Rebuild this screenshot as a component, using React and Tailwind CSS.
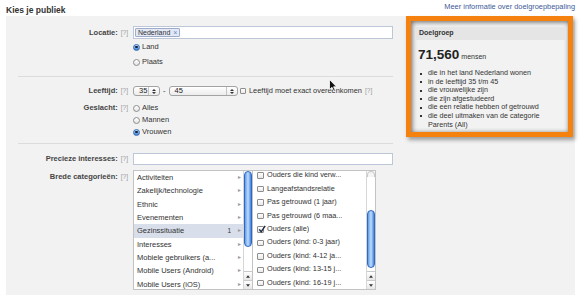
import React from "react";

const leftItems = [
  { label: "Activiteiten" },
  { label: "Zakelijk/technologie" },
  { label: "Ethnic" },
  { label: "Evenementen" },
  { label: "Gezinssituatie", count: "1", selected: true },
  { label: "Interesses" },
  { label: "Mobiele gebruikers (a..." },
  { label: "Mobile Users (Android)" },
  { label: "Mobile Users (iOS)" },
];

const rightItems = [
  { label: "Ouders die kind verw..." },
  { label: "Langeafstandsrelatie" },
  { label: "Pas getrouwd (1 jaar)" },
  { label: "Pas getrouwd (6 maa..." },
  { label: "Ouders (alle)", checked: true },
  { label: "Ouders (kind: 0-3 jaar)" },
  { label: "Ouders (kind: 4-12 ja..." },
  { label: "Ouders (kind: 13-15 j..." },
  { label: "Ouders (kind: 16-19 j..." },
];

const summary = [
  "die in het land Nederland wonen",
  "in de leeftijd 35 t/m 45",
  "die vrouwelijke zijn",
  "die zijn afgestudeerd",
  "die een relatie hebben of getrouwd",
];

function Help() {
  return <span className="ml-[3px] text-[6.5px] font-normal text-[#9a9a9a]">[?]</span>;
}

function Radio({ checked }) {
  if (checked) {
    return (
      <span className="flex h-[7px] w-[7px] shrink-0 items-center justify-center rounded-full border border-[#3b6cb0] bg-linear-to-b from-[#b8d6f7] to-[#3a7fd8]">
        <span className="h-[2.5px] w-[2.5px] rounded-full bg-[#13233f]" />
      </span>
    );
  }
  return <span className="h-[7px] w-[7px] shrink-0 rounded-full border border-[#8d8d8d] bg-linear-to-b from-white to-[#e4e4e4]" />;
}

function Checkbox({ checked }) {
  return (
    <span className="relative block h-[6.5px] w-[6.5px] shrink-0 rounded-[1px] border border-[#8d8d8d] bg-linear-to-b from-white to-[#e8e8e8]">
      {checked && (
        <svg viewBox="0 0 10 10" className="absolute -left-[0.5px] -top-[2.5px] h-[8px] w-[8px]">
          <path d="M1.5 5.5 L4 8.5 L9 1" fill="none" stroke="#1d2a44" strokeWidth="1.8" />
        </svg>
      )}
    </span>
  );
}

function Select({ value, className }) {
  return (
    <div className={`flex h-[10px] items-center rounded-[3px] border border-[#a3a3a3] bg-linear-to-b from-white to-[#ececec] ${className}`}>
      <span className="flex-1 pl-[5px] text-[7.5px] leading-none text-[#222]">{value}</span>
      <span className="flex h-full w-[11px] flex-col items-center justify-center gap-[1px] border-l border-[#c4c4c4]">
        <svg viewBox="0 0 6 3" className="h-[2px] w-[4px]"><path d="M0 3 L3 0 L6 3Z" fill="#333" /></svg>
        <svg viewBox="0 0 6 3" className="h-[2px] w-[4px]"><path d="M0 0 L3 3 L6 0Z" fill="#333" /></svg>
      </span>
    </div>
  );
}

function Scrollbar({ top, thumb, cap }) {
  return (
    <div className="flex h-full w-[9px] flex-col border-l border-[#d6d6d6] bg-white">
      <div className="relative flex-1">
        {cap && <div className="h-[6px] rounded-t-full border border-b-0 border-[#c9c9c9] bg-[#f4f4f4]" />}
        <div style={{ marginTop: top }} className="mx-auto w-[8px] rounded-full border border-[#2f68c0] bg-linear-to-r from-[#5d9ce8] via-[#c2dbf8] to-[#3d84e0]">
          <div style={{ height: thumb }} />
        </div>
      </div>
      <div className="flex h-[9px] items-center justify-center border-t border-[#c9c9c9] bg-linear-to-b from-white to-[#e6e6e6]">
        <svg viewBox="0 0 6 4" className="h-[3px] w-[4px]"><path d="M0 4 L3 0 L6 4Z" fill="#333" /></svg>
      </div>
      <div className="flex h-[9px] items-center justify-center border-t border-[#c9c9c9] bg-linear-to-b from-white to-[#e6e6e6]">
        <svg viewBox="0 0 6 4" className="h-[3px] w-[4px]"><path d="M0 0 L3 4 L6 0Z" fill="#333" /></svg>
      </div>
    </div>
  );
}

function Label({ children }) {
  return (
    <div className="w-[122px] shrink-0 whitespace-nowrap text-right text-[7.5px] font-bold text-[#444]">
      {children}
      <Help />
    </div>
  );
}

export default function App() {
  return (
    <div
      className="relative h-[295px] w-[580px] overflow-hidden bg-white text-[#333]"
      style={{ fontFamily: '"Liberation Sans", Arial, sans-serif' }}
    >
      <div className="flex h-[16px] justify-between pl-[6px] pr-[5px]">
        <h2 className="pt-[5px] text-[8.5px] font-bold leading-[10px] text-[#333]">Kies je publiek</h2>
        <a className="pt-[2px] text-[7.4px] leading-[10px] text-[#3b5998]">Meer informatie over doelgroepbepaling</a>
      </div>

      <div className="ml-[6px] flex h-[279px] w-[569px] bg-[#f2f2f2]">
        {/* form */}
        <div className="w-[400px] shrink-0">
          <div className="mt-[10px] flex items-center">
            <Label>Locatie:</Label>
            <div className="ml-[5px] flex h-[13px] w-[260px] items-center border border-[#bdc7d8] bg-white pl-[1px]">
              <span className="flex h-[9px] items-center gap-[3px] rounded-[1px] border border-[#9dacc9] bg-[#e2e8f6] px-[2px] text-[7px] leading-none text-[#333]">
                Nederland <span className="text-[7px] text-[#6d84b4]">×</span>
              </span>
            </div>
          </div>
          <div className="ml-[127px] mt-[2px] flex h-[12px] items-center gap-[2px] text-[7.5px]">
            <Radio checked />
            <span>Land</span>
          </div>
          <div className="ml-[127px] mt-[3px] flex h-[12px] items-center gap-[2px] text-[7.5px]">
            <Radio />
            <span>Plaats</span>
          </div>
          <div className="ml-[12px] mt-[8px] h-px w-[375px] bg-[#dcdcdc]" />

          <div className="mt-[9px] flex h-[10px] items-center">
            <Label>Leeftijd:</Label>
            <div className="ml-[5px] flex items-center">
              <Select value="35" className="w-[27px]" />
              <span className="mx-[3px] text-[7.5px]">-</span>
              <Select value="45" className="w-[69px]" />
              <span className="ml-[2px]">
                <Checkbox />
              </span>
              <span className="ml-[3px] whitespace-nowrap text-[7.4px]">Leeftijd moet exact overeenkomen</span>
              <Help />
            </div>
          </div>

          <div className="mt-[6px] flex">
            <div className="flex h-[12px] items-center">
              <Label>Geslacht:</Label>
            </div>
            <div className="ml-[5px] text-[7.5px]">
              <div className="flex h-[12px] items-center gap-[2px]"><Radio /><span>Alles</span></div>
              <div className="flex h-[12px] items-center gap-[2px]"><Radio /><span>Mannen</span></div>
              <div className="flex h-[12px] items-center gap-[2px]"><Radio checked /><span>Vrouwen</span></div>
            </div>
          </div>
          <div className="ml-[12px] mt-[5px] h-px w-[375px] bg-[#dcdcdc]" />

          <div className="mt-[9px] flex items-center">
            <Label>Precieze interesses:</Label>
            <div className="ml-[5px] h-[12px] w-[260px] border border-[#bdc7d8] bg-white" />
          </div>

          <div className="mt-[5px] flex">
            <div className="pt-[1px]">
              <Label>Brede categorieën:</Label>
            </div>
            <div className="ml-[5px] flex h-[120px]">
              <div className="flex h-full w-[120px] border border-[#c3c3c3] bg-white">
                <div className="flex-1 overflow-hidden">
                  {leftItems.map((it) => (
                    <div
                      key={it.label}
                      className={`flex h-[13.33px] items-center pl-[3px] pr-[2px] text-[7.5px] ${it.selected ? "bg-[#d8dfea]" : ""}`}
                    >
                      <span className="flex-1 truncate">{it.label}</span>
                      {it.count && <span className="mr-[7px] text-[6.5px]">{it.count}</span>}
                      <span className="text-[6px] text-[#999]">▸</span>
                    </div>
                  ))}
                </div>
                <Scrollbar top={0} thumb={74} />
              </div>
              <div className="flex h-full w-[123px] border border-l-0 border-[#c3c3c3] bg-white">
                <div className="flex-1 overflow-hidden">
                  <div className="-mt-[2px]">
                    {rightItems.map((it) => (
                      <div key={it.label} className="flex h-[13.45px] items-center gap-[3.5px] pl-[4px] text-[7.3px]">
                        <Checkbox checked={it.checked} />
                        <span className="truncate whitespace-nowrap">{it.label}</span>
                      </div>
                    ))}
                  </div>
                </div>
                <Scrollbar cap top={33} thumb={56} />
              </div>
            </div>
          </div>
        </div>

        {/* doelgroep */}
        <div className="h-[121px] w-[167px] shrink-0 border-[5px] border-[#f5820f] bg-[#f2f2f2] shadow-[2px_3px_4px_rgba(0,0,0,0.35),inset_1px_1px_5px_rgba(0,0,0,0.6)]">
          <div className="ml-[4px] mr-[3px] mt-[6px] flex h-[13px] items-center bg-[#e5e5e5] pl-[4px] text-[7px] font-bold text-[#333]">
            Doelgroep
          </div>
          <div className="ml-[7px] mt-[8px] flex items-baseline gap-[2px] leading-[14px]">
            <span className="text-[13.5px] font-bold text-[#222]">71,560</span>
            <span className="text-[7px] text-[#333]">mensen</span>
          </div>
          <ul className="ml-[9px] mt-[5px] text-[7.2px] leading-[8.6px] text-[#333]">
            {summary.map((s) => (
              <li key={s} className="flex items-start">
                <span className="mr-[6px] mt-[3.5px] h-[2px] w-[2px] shrink-0 bg-[#333]" />
                <span className="whitespace-nowrap">{s}</span>
              </li>
            ))}
            <li className="flex items-start">
              <span className="mr-[6px] mt-[3.5px] h-[2px] w-[2px] shrink-0 bg-[#333]" />
              <span className="whitespace-nowrap">
                die deel uitmaken van de categorie
                <br />
                Parents (All)
              </span>
            </li>
          </ul>
        </div>
      </div>

      {/* mouse pointer */}
      <svg viewBox="0 0 8 13" className="absolute left-[329px] top-[79px] h-[13px] w-[8px]">
        <path d="M0.5 0.5 L0.5 10.5 L3 8.3 L4.8 12.3 L6.3 11.6 L4.6 7.8 L7.5 7.8 Z" fill="#111" stroke="#fff" strokeWidth="0.8" />
      </svg>
    </div>
  );
}
